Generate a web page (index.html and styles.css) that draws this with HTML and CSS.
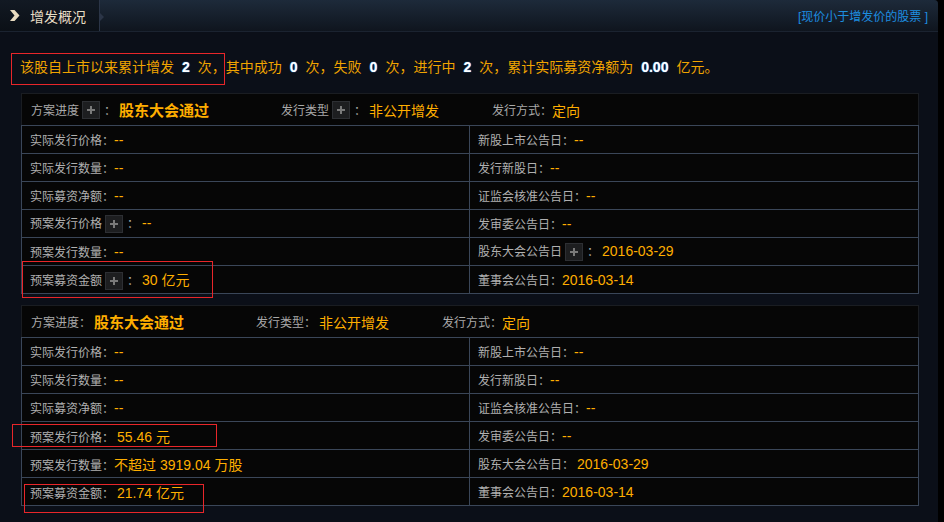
FILE: index.html
```html
<!DOCTYPE html>
<html lang="zh-CN">
<head>
    <meta charset="UTF-8">
    <title>增发概况</title>
    <link rel="stylesheet" href="styles.css">
</head>
<body>
    <div class="panel">
        <div class="head">
            <div class="tab">
                <svg class="chev" width="12" height="13" viewBox="0 0 12 13"><path d="M1 1 L5.5 1 L10.5 6.5 L5.5 12 L1 12 L5.5 6.5 Z" fill="#e9dcc0"/></svg>
                <span>增发概况</span>
            </div>
            <a class="link" href="#">[现价小于增发价的股票 ]</a>
        </div>

        <p class="summary">该股自上市以来累计增发<b>2</b>次，其中成功<b>0</b>次，失败<b>0</b>次，进行中<b>2</b>次，累计实际募资净额为<b>0.00</b>亿元。</p>

        <div class="plan">
            <div class="plan-head">
                <span class="item first">方案进度<i class="plus"></i>：<em class="strong">股东大会通过</em></span>
                <span class="item second">发行类型<i class="plus"></i>：<em>非公开增发</em></span>
                <span class="item">发行方式：<em>定向</em></span>
            </div>
            <table>
                <tr><td>实际发行价格：<em>--</em></td><td>新股上市公告日：<em>--</em></td></tr>
                <tr><td>实际发行数量：<em>--</em></td><td>发行新股日：<em>--</em></td></tr>
                <tr><td>实际募资净额：<em>--</em></td><td>证监会核准公告日：<em>--</em></td></tr>
                <tr><td>预案发行价格<i class="plus"></i>：<em class="gap">--</em></td><td>发审委公告日：<em>--</em></td></tr>
                <tr><td>预案发行数量：<em>--</em></td><td>股东大会公告日<i class="plus"></i>：<em class="gap">2016-03-29</em></td></tr>
                <tr><td>预案募资金额<i class="plus"></i>：<em class="gap">30 亿元</em></td><td>董事会公告日：<em>2016-03-14</em></td></tr>
            </table>
        </div>

        <div class="plan">
            <div class="plan-head">
                <span class="item first">方案进度：<em class="strong">股东大会通过</em></span>
                <span class="item second">发行类型：<em>非公开增发</em></span>
                <span class="item">发行方式：<em>定向</em></span>
            </div>
            <table>
                <tr><td>实际发行价格：<em>--</em></td><td>新股上市公告日：<em>--</em></td></tr>
                <tr><td>实际发行数量：<em>--</em></td><td>发行新股日：<em>--</em></td></tr>
                <tr><td>实际募资净额：<em>--</em></td><td>证监会核准公告日：<em>--</em></td></tr>
                <tr><td>预案发行价格：<em class="gap">55.46 元</em></td><td>发审委公告日：<em>--</em></td></tr>
                <tr><td>预案发行数量：<em>不超过 3919.04 万股</em></td><td>股东大会公告日：<em class="gap">2016-03-29</em></td></tr>
                <tr><td>预案募资金额：<em class="gap">21.74 亿元</em></td><td>董事会公告日：<em>2016-03-14</em></td></tr>
            </table>
        </div>

        <div class="mark mark-1"></div>
        <div class="mark mark-2"></div>
        <div class="mark mark-3"></div>
        <div class="mark mark-4"></div>
    </div>
</body>
</html>
```

FILE: styles.css
```css
body { margin: 0; background: #000; font-family: "Liberation Sans", "Noto Sans CJK SC", sans-serif; }
.panel { position: relative; width: 938px; height: 522px; background: #0b0f18; border-top-right-radius: 4px; overflow: hidden; }
.head { display: flex; justify-content: space-between; align-items: center; height: 32px; background: linear-gradient(#1d2a3a, #0f151e); border-bottom: 1px solid #1b2330; box-sizing: border-box; }
.tab { position: relative; display: flex; align-items: center; width: 100px; height: 31px; background: linear-gradient(#121923, #0b1016); border-right: 1px solid #2b3547; box-sizing: border-box; color: #e6dcc4; font-size: 14px; }
.tab::after { content: ""; position: absolute; right: -5px; top: 13px; border-left: 4px solid #2b3547; border-top: 4px solid transparent; border-bottom: 4px solid transparent; }
.chev { margin: 0 9px 0 9px; }
.link { color: #1d8ee0; font-size: 12px; text-decoration: none; margin-right: 10px; }
.summary { margin: 20px 0 11px; padding: 0 20px; height: 30px; line-height: 30px; color: #f0a400; font-size: 14px; }
.summary b { color: #fff; padding: 0 8px; font-weight: bold; text-shadow: 0 0 1px #3a8fe0, 0 0 1px #3a8fe0; }
.plan { margin: 0 19px 11px 21px; background: #060606; }
.plan-head { display: flex; align-items: center; height: 32px; padding-left: 9px; border: 1px solid #1a1d22; border-bottom: 0; box-sizing: border-box; color: #a9a9a9; font-size: 12px; }
.item { display: flex; align-items: center; }
.item.first { margin-right: 72px; }
.item.second { margin-right: 53px; }
em { font-style: normal; color: #ffae00; font-size: 14px; }
em.strong { font-weight: bold; font-size: 15px; margin-left: 3px; }
.plan-head .second em { margin-left: 3px; }
.plus { display: inline-block; position: relative; width: 16px; height: 16px; margin: 0 4px 0 3px; background: #1d1e20; border: 1px solid #2d2f33; }
.plus::before, .plus::after { content: ""; position: absolute; background: #7a7a7a; }
.plus::before { left: 4px; top: 7px; width: 8px; height: 2px; }
.plus::after { left: 7px; top: 4px; width: 2px; height: 8px; }
table { width: 100%; border-collapse: collapse; }
td { height: 27px; padding: 0 8px; border: 1px solid #3a4658; color: #b0b0b0; font-size: 12px; white-space: nowrap; }
td:first-child { width: 431px; }
td .plus { vertical-align: middle; }
em.gap { margin-left: 3px; }
.mark { position: absolute; border: 1px solid #e8262a; }
.mark-1 { left: 11px; top: 53px; width: 212px; height: 30px; }
.mark-2 { left: 22px; top: 261px; width: 189px; height: 35px; }
.mark-3 { left: 12px; top: 424px; width: 203px; height: 21px; }
.mark-4 { left: 24px; top: 484px; width: 178px; height: 27px; }
```
